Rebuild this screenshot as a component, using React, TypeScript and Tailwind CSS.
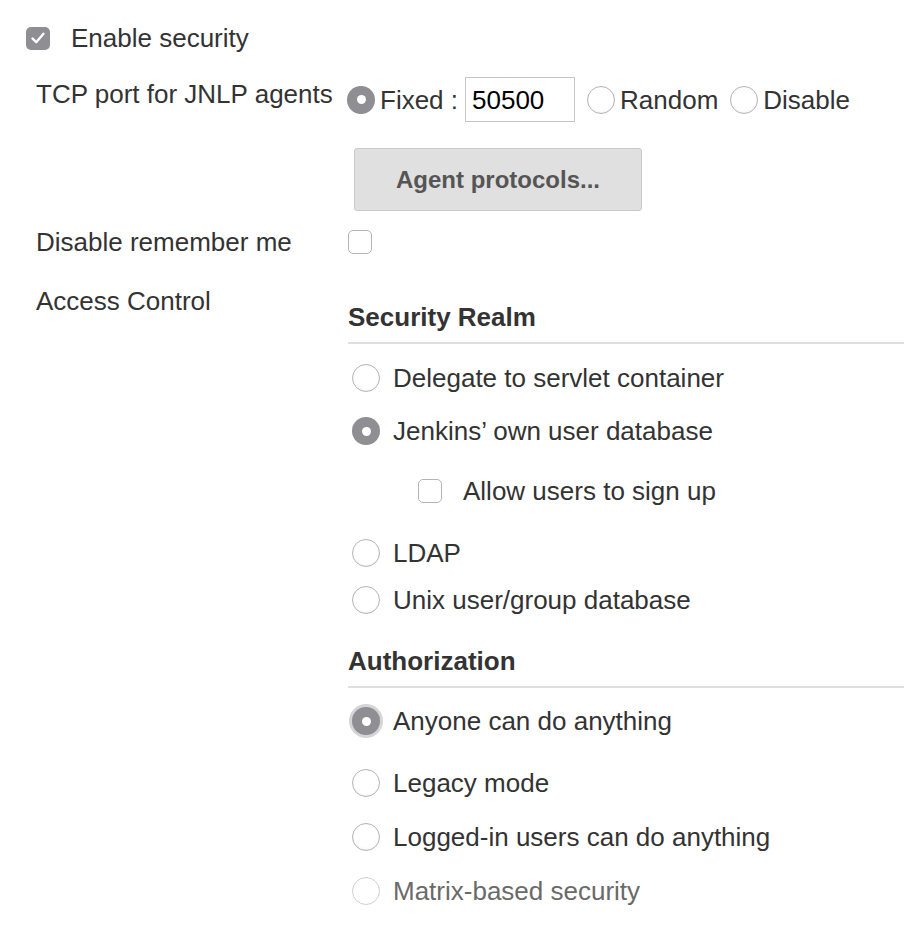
import React from "react";

function Radio({ checked = false, ring = false, faded = false }: { checked?: boolean; ring?: boolean; faded?: boolean }) {
  if (checked) {
    return (
      <div
        className={
          "w-[28px] h-[28px] shrink-0 rounded-full bg-[#8e8e93] flex items-center justify-center " +
          (ring ? "shadow-[0_0_0_3px_#d5d5d7]" : "")
        }
      >
        <div className="w-[9px] h-[9px] rounded-full bg-white" />
      </div>
    );
  }
  return (
    <div
      className={
        "w-[28px] h-[28px] shrink-0 rounded-full bg-white border " +
        (faded ? "border-[#d0d0d0]" : "border-[#b4b4b4] shadow-[inset_0_-1px_2px_rgba(0,0,0,0.06)]")
      }
    />
  );
}

function Checkbox({ checked = false }: { checked?: boolean }) {
  if (checked) {
    return (
      <div className="w-[24px] h-[23px] shrink-0 rounded-[5px] bg-[#8e8e93] flex items-center justify-center">
        <svg width="16" height="14" viewBox="0 0 16 14" fill="none">
          <path d="M2.5 7.5 L6.2 11.2 L13.5 2.8" stroke="white" strokeWidth="2.4" strokeLinecap="round" strokeLinejoin="round" />
        </svg>
      </div>
    );
  }
  return <div className="w-[24px] h-[24px] shrink-0 rounded-[5px] bg-white border border-[#b4b4b4]" />;
}

function OptionRow({ h, children, faded = false, checked = false, ring = false }: { h: string; children: React.ReactNode; faded?: boolean; checked?: boolean; ring?: boolean }) {
  return (
    <div className={"flex items-center pl-[4px] gap-[13px] " + h}>
      <Radio checked={checked} ring={ring} faded={faded} />
      <span className={faded ? "text-[#6a6a6a]" : ""}>{children}</span>
    </div>
  );
}

export default function App() {
  return (
    <div className="w-[904px] h-[934px] overflow-hidden bg-white text-[#333333] font-['Liberation_Sans',Arial,sans-serif] text-[26px] leading-[30px]">
      {/* Enable security */}
      <div className="h-[76px] flex items-center pl-[26px] gap-[21px]">
        <Checkbox checked />
        <span>Enable security</span>
      </div>

      {/* TCP port */}
      <div className="flex mt-[1px]">
        <div className="w-[347px] shrink-0 pl-[36px] mt-[2px] whitespace-nowrap">TCP port for JNLP agents</div>
        <div className="flex flex-col">
          <div className="h-[45px] flex items-center whitespace-nowrap">
            <Radio checked />
            <span className="ml-[5px]">Fixed :</span>
            <div className="ml-[7px] w-[110px] h-[45px] border border-[#c6c6c6] px-[6px] flex items-center text-black">50500</div>
            <div className="ml-[12px]"><Radio /></div>
            <span className="ml-[5px]">Random</span>
            <div className="ml-[12px]"><Radio /></div>
            <span className="ml-[5px]">Disable</span>
          </div>
          <button className="mt-[26px] ml-[7px] w-[288px] h-[63px] bg-[#e0e0e0] border border-[#c9c9c9] rounded-[3px] text-[24px] font-bold text-[#555555] flex items-center justify-center">
            Agent protocols...
          </button>
        </div>
      </div>

      {/* Disable remember me */}
      <div className="flex h-[62px] items-center">
        <div className="w-[347px] shrink-0 pl-[36px]">Disable remember me</div>
        <div className="ml-[1px]"><Checkbox /></div>
      </div>

      {/* Access Control */}
      <div className="flex">
        <div className="w-[347px] shrink-0 pl-[36px] mt-[13px]">Access Control</div>
        <div className="flex-1 pl-[1px] pt-[29px] flex flex-col">
          <div className="font-bold pb-[10px]">Security Realm</div>
          <div className="h-[2px] bg-[#dfdfdf]" />
          <div className="mt-[10px]" />
          <OptionRow h="h-[48px]">Delegate to servlet container</OptionRow>
          <OptionRow h="h-[58px]" checked>Jenkins’ own user database</OptionRow>
          <div className="h-[62px] flex items-center pl-[70px] gap-[21px]">
            <Checkbox />
            <span>Allow users to sign up</span>
          </div>
          <OptionRow h="h-[62px]">LDAP</OptionRow>
          <OptionRow h="h-[32px]">Unix user/group database</OptionRow>

          <div className="font-bold mt-[30px] pb-[10px]">Authorization</div>
          <div className="h-[2px] bg-[#dfdfdf]" />
          <OptionRow h="h-[66px]" checked ring>Anyone can do anything</OptionRow>
          <OptionRow h="h-[58px]">Legacy mode</OptionRow>
          <OptionRow h="h-[50px]">Logged-in users can do anything</OptionRow>
          <OptionRow h="h-[58px]" faded>Matrix-based security</OptionRow>
        </div>
      </div>
    </div>
  );
}
